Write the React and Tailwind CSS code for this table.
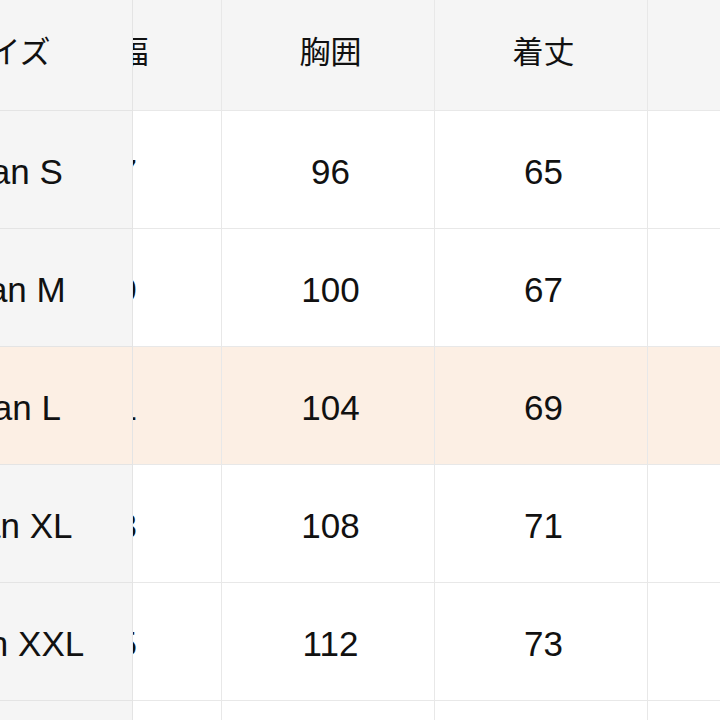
import { useLayoutEffect, useRef } from "react";

const cols = ["肩幅", "胸囲", "着丈", "袖丈"];

const rows = [
  { size: "Asian S", vals: [47, 96, 65, 22] },
  { size: "Asian M", vals: [49, 100, 67, 23] },
  { size: "Asian L", vals: [51, 104, 69, 24], hot: true },
  { size: "Asian XL", vals: [53, 108, 71, 25] },
  { size: "Asian XXL", vals: [55, 112, 73, 26] },
  { size: "Asian 3XL", vals: [57, 116, 75, 27] },
];

export default function App() {
  const scroller = useRef(null);

  // the chart sits scrolled sideways, first column pinned
  useLayoutEffect(() => {
    if (scroller.current) scroller.current.scrollLeft = 124;
  }, []);

  return (
    <div
      className="w-[720px] h-[720px] overflow-hidden bg-white text-[#111]"
      style={{ fontFamily: '"Liberation Sans", "Noto Sans CJK JP", sans-serif' }}
    >
      <div
        ref={scroller}
        className="ml-[-119px] w-[839px] overflow-x-auto [scrollbar-width:none]"
      >
        <table className="border-separate border-spacing-0 table-fixed w-[1104px]">
          <thead>
            <tr className="h-[111px] bg-[#f5f5f5]">
              <th className="sticky left-0 z-10 w-[252px] bg-[#f5f5f5] border-b border-r border-[#e4e4e4] pr-1 pb-1 text-[31px] font-normal">
                サイズ
              </th>
              {cols.map((c) => (
                <th
                  key={c}
                  className="w-[213px] border-b border-r border-[#e8e8e8] pl-[5px] pb-1 text-[31px] font-normal"
                >
                  {c}
                </th>
              ))}
            </tr>
          </thead>
          <tbody>
            {rows.map((r) => (
              <tr key={r.size} className={r.hot ? "h-[118px] bg-[#fcefe4]" : "h-[118px] bg-white"}>
                <td
                  className={
                    "sticky left-0 z-10 border-b border-r border-[#e4e4e4] pr-2 pt-[5px] text-center text-[35px] whitespace-nowrap " +
                    (r.hot ? "bg-[#fcefe4]" : "bg-[#f5f5f5]")
                  }
                >
                  {r.size}
                </td>
                {r.vals.map((v, i) => (
                  <td
                    key={i}
                    className="border-b border-r border-[#e8e8e8] pl-[5px] pt-[5px] text-center text-[35px]"
                  >
                    {v}
                  </td>
                ))}
              </tr>
            ))}
          </tbody>
        </table>
      </div>
    </div>
  );
}
